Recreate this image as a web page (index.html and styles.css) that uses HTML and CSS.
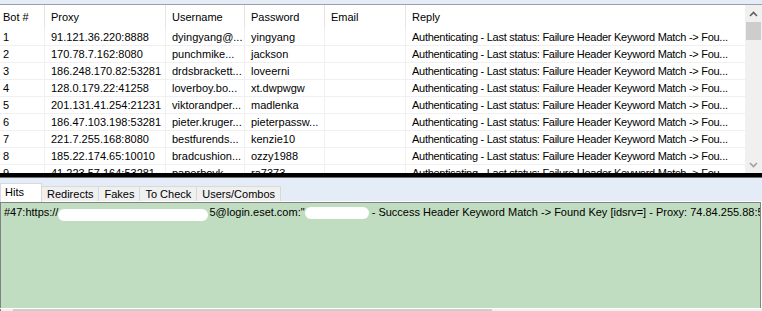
FILE: index.html
```html
<!DOCTYPE html>
<html lang="en">
<head>
    <meta charset="UTF-8">
    <title>Bots</title>
    <link rel="stylesheet" href="styles.css">
</head>
<body>
    <div class="top-strip"></div>

    <!-- Bots grid -->
    <div class="grid-area">
        <div class="grid">
            <div class="row head">
                <div class="cell c-bot">Bot #</div>
                <div class="cell">Proxy</div>
                <div class="cell">Username</div>
                <div class="cell">Password</div>
                <div class="cell">Email</div>
                <div class="cell c-reply">Reply</div>
            </div>
            <div class="row">
                <div class="cell c-bot">1</div><div class="cell">91.121.36.220:8888</div><div class="cell">dyingyang@...</div><div class="cell">yingyang</div><div class="cell"></div><div class="cell c-reply">Authenticating - Last status: Failure Header Keyword Match -&gt; Fou...</div>
            </div>
            <div class="row">
                <div class="cell c-bot">2</div><div class="cell">170.78.7.162:8080</div><div class="cell">punchmike...</div><div class="cell">jackson</div><div class="cell"></div><div class="cell c-reply">Authenticating - Last status: Failure Header Keyword Match -&gt; Fou...</div>
            </div>
            <div class="row">
                <div class="cell c-bot">3</div><div class="cell">186.248.170.82:53281</div><div class="cell">drdsbrackett...</div><div class="cell">loveerni</div><div class="cell"></div><div class="cell c-reply">Authenticating - Last status: Failure Header Keyword Match -&gt; Fou...</div>
            </div>
            <div class="row">
                <div class="cell c-bot">4</div><div class="cell">128.0.179.22:41258</div><div class="cell">loverboy.bo...</div><div class="cell">xt.dwpwgw</div><div class="cell"></div><div class="cell c-reply">Authenticating - Last status: Failure Header Keyword Match -&gt; Fou...</div>
            </div>
            <div class="row">
                <div class="cell c-bot">5</div><div class="cell">201.131.41.254:21231</div><div class="cell">viktorandper...</div><div class="cell">madlenka</div><div class="cell"></div><div class="cell c-reply">Authenticating - Last status: Failure Header Keyword Match -&gt; Fou...</div>
            </div>
            <div class="row">
                <div class="cell c-bot">6</div><div class="cell">186.47.103.198:53281</div><div class="cell">pieter.kruger...</div><div class="cell">pieterpassw...</div><div class="cell"></div><div class="cell c-reply">Authenticating - Last status: Failure Header Keyword Match -&gt; Fou...</div>
            </div>
            <div class="row">
                <div class="cell c-bot">7</div><div class="cell">221.7.255.168:8080</div><div class="cell">bestfurends...</div><div class="cell">kenzie10</div><div class="cell"></div><div class="cell c-reply">Authenticating - Last status: Failure Header Keyword Match -&gt; Fou...</div>
            </div>
            <div class="row">
                <div class="cell c-bot">8</div><div class="cell">185.22.174.65:10010</div><div class="cell">bradcushion...</div><div class="cell">ozzy1988</div><div class="cell"></div><div class="cell c-reply">Authenticating - Last status: Failure Header Keyword Match -&gt; Fou...</div>
            </div>
            <div class="row">
                <div class="cell c-bot">9</div><div class="cell">41.223.57.164:53281</div><div class="cell">paperboyk...</div><div class="cell">ra7373</div><div class="cell"></div><div class="cell c-reply">Authenticating - Last status: Failure Header Keyword Match -&gt; Fou...</div>
            </div>
        </div>

        <div class="vscroll">
            <div class="arrow">
                <svg width="9" height="6" viewBox="0 0 9 6"><path d="M1 5 L4.5 1.5 L8 5" fill="none" stroke="#606060" stroke-width="1.6"/></svg>
            </div>
            <div class="vthumb"></div>
            <div class="vtrack"></div>
            <div class="arrow">
                <svg width="9" height="6" viewBox="0 0 9 6"><path d="M1 1 L4.5 4.5 L8 1" fill="none" stroke="#a0a0a0" stroke-width="1.6"/></svg>
            </div>
        </div>
    </div>

    <div class="splitter"></div>

    <!-- Result tabs -->
    <div class="lower">
        <div class="tabs">
            <div class="tab active">Hits</div>
            <div class="tab">Redirects</div>
            <div class="tab">Fakes</div>
            <div class="tab">To Check</div>
            <div class="tab">Users/Combos</div>
        </div>
        <div class="hits">
            <div class="hit-line">#47:https://<span class="redact r1">mi</span>5@login.eset.com:"<span class="redact r2"></span> - Success Header Keyword Match -&gt; Found Key [idsrv=] - Proxy: 74.84.255.88:53281</div>
        </div>
        <div class="hscroll">
            <div class="hthumb"></div>
        </div>
    </div>
</body>
</html>
```

FILE: styles.css
```css
/* Global */
body {
    margin: 0;
    width: 762px;
    height: 311px;
    overflow: hidden;
    font-family: "Liberation Sans", Arial, sans-serif;
    font-size: 11px;
    color: #000;
    background: #fff;
}

.top-strip {
    height: 4px;
    background: #e3ecf7;
    border-bottom: 1px solid #a0a0a0;
}

/* Grid */
.grid-area {
    display: flex;
    height: 168px;
    overflow: hidden;
}

.grid {
    flex: 1;
    overflow: hidden;
}

.row {
    display: grid;
    grid-template-columns: 45px 121px 79px 80px 81px 1fr;
    height: 17px;
    border-bottom: 1px solid #f0f0f0;
    box-sizing: border-box;
}

.row.head {
    height: 24px;
    border-bottom: none;
}

.cell {
    padding-left: 6px;
    line-height: 16px;
    white-space: nowrap;
    overflow: hidden;
    border-right: 1px solid #f0f0f0;
}

.head .cell {
    line-height: 24px;
    border-right: 1px solid #e5e5e5;
}

.cell.c-bot {
    padding-left: 3px;
}

.cell.c-reply {
    border-right: none;
    letter-spacing: -0.28px;
}

.head .cell.c-reply {
    letter-spacing: 0;
}

/* Vertical scrollbar */
.vscroll {
    width: 17px;
    background: #f0f0f0;
    display: flex;
    flex-direction: column;
}

.arrow {
    height: 17px;
    display: flex;
    align-items: center;
    justify-content: center;
}

.vthumb {
    height: 18px;
    margin: 0 1px;
    background: #cdcdcd;
}

.vtrack {
    flex: 1;
}

/* Splitter */
.splitter {
    height: 4px;
    background: #000;
    border-bottom: 1px solid #6d6d6d;
}

/* Lower panel */
.lower {
    background: #e3ecf7;
    padding-top: 5px;
}

.tabs {
    display: flex;
    align-items: flex-end;
    height: 19px;
}

.tab {
    height: 16px;
    line-height: 15px;
    padding: 0 5px;
    background: #f0f0f0;
    border: 1px solid #d9d9d9;
    border-bottom: none;
    box-sizing: border-box;
    margin-left: -1px;
}

.tab.active {
    width: 42px;
    height: 19px;
    line-height: 16px;
    background: #fff;
    padding: 0 0 0 4px;
    margin-left: 0;
    position: relative;
    z-index: 1;
}

.hits {
    height: 105px;
    margin-right: 1px;
    background: #c1ddc1;
    border: 1px solid #828282;
    border-bottom: none;
    outline: 1px solid #fff;
}

.hit-line {
    padding: 3px 0 0 3px;
    line-height: 13px;
    white-space: nowrap;
    overflow: hidden;
}

.redact {
    display: inline-block;
    height: 12px;
    vertical-align: -3px;
    background: #fff;
    border-radius: 6px;
    color: transparent;
}

.redact.r1 {
    width: 150px;
    margin-right: 1px;
}

.redact.r2 {
    width: 64px;
}

/* Horizontal scrollbar */
.hscroll {
    height: 17px;
    margin-right: 1px;
    background: #f0f0f0;
    border-left: 1px solid #828282;
    padding-top: 1px;
}

.hthumb {
    margin-left: 12px;
    width: 479px;
    height: 15px;
    background: #cdcdcd;
}
```
